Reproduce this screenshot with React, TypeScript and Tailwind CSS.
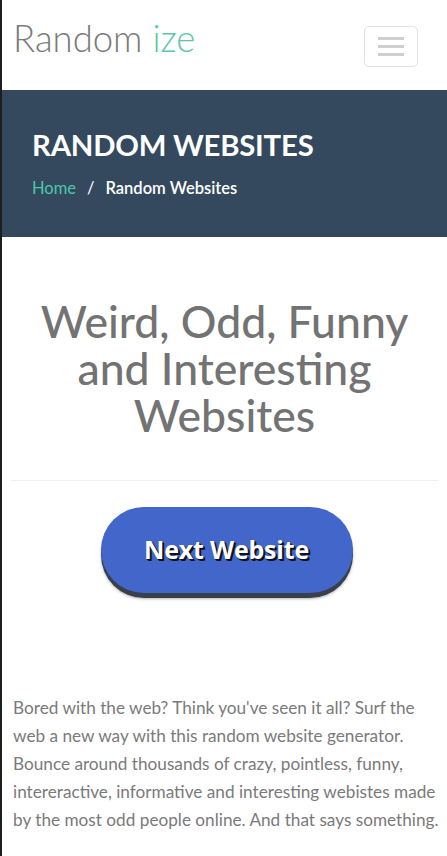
import React from 'react'

const lato = { fontFamily: 'Lato, "Open Sans", sans-serif' }

const Header = () => (
  <header className="h-[90px] flex items-start justify-between pl-[11px] pr-[29px]">
    <a href="#" className="mt-[16px] text-[36.5px] font-light leading-[44px] text-[#7a7a7a]">
      Random <span className="text-[#5ac8a8]">ize</span>
    </a>
    <button className="mt-[26px] w-[54px] h-[41px] rounded-[5px] border border-[#e2e2e2] flex flex-col items-center justify-center gap-[5px]">
      <span className="block w-[26px] h-[3px] bg-[#cfcfcf]" />
      <span className="block w-[26px] h-[3px] bg-[#cfcfcf]" />
      <span className="block w-[26px] h-[3px] bg-[#cfcfcf]" />
    </button>
  </header>
)

const Banner = () => (
  <section className="h-[147px] bg-[#34495e] pl-[30px] pt-[37px]">
    <h1 className="text-[29.3px] font-bold text-white leading-[36px] tracking-[-0.2px]">RANDOM WEBSITES</h1>
    <nav className="mt-[14px] text-[16.5px] leading-[22px] flex items-center">
      <a href="#" className="text-[#48c9a9]">Home</a>
      <span className="text-white mx-[11px]">/</span>
      <span className="text-white font-semibold">Random Websites</span>
    </nav>
  </section>
)

export default function App() {
  return (
    <div style={lato} className="w-[447px] min-h-[856px] bg-white border-l-2 border-[#1e1e1e] overflow-hidden">
      <Header />
      <Banner />
      <main className="px-[9px]">
        <h2 className="mt-[60px] text-center text-[44.5px] leading-[47px] text-[#737373] font-medium">
          Weird, Odd, Funny<br />and Interesting<br />Websites
        </h2>
        <hr className="mt-[42px] border-0 h-px bg-[#efefef]" />
        <div className="flex justify-center mt-[26px] pl-[4px]">
          <button
            className="w-[252px] h-[86px] rounded-full bg-[#4266c9] shadow-[0_5px_0_#3a3f4c,0_6px_3px_rgba(0,0,0,0.3)] text-white text-[25px] font-bold tracking-[-0.2px] [text-shadow:2px_2px_0_#111,1px_1px_1px_#000]"
            style={{ fontFamily: '"Open Sans", sans-serif' }}
          >
            Next Website
          </button>
        </div>
        <p className="mt-[101px] pl-[2px] -mr-[9px] text-[17.2px] leading-[28px] text-[#7a7a7a]">
          Bored with the web? Think you've seen it all? Surf the web a new way with this random website generator. Bounce around thousands of crazy, pointless, funny, intereractive, informative and interesting webistes made by the most odd people online. And that says something.
        </p>
      </main>
    </div>
  )
}
